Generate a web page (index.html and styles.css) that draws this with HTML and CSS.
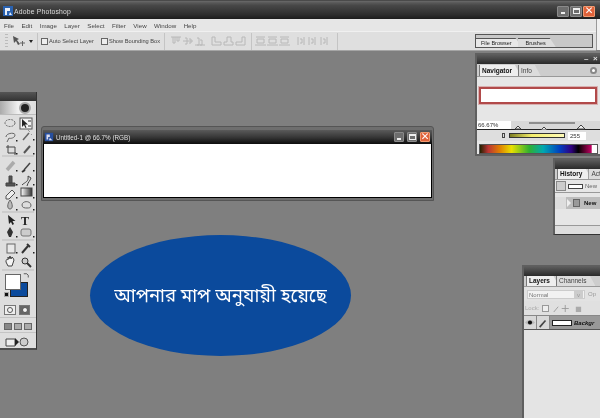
FILE: index.html
```html
<!DOCTYPE html>
<html lang="bn">
<head>
<meta charset="utf-8">
<title>Adobe Photoshop</title>
<link rel="stylesheet" href="styles.css">
</head>
<body>
<div class="app">
  <header class="titlebar">
    <svg class="ps-icon" viewBox="0 0 12 12"><rect x="1" y="1" width="10" height="10" fill="#2a62b0"/><path d="M3 3h5v3H5v4H3zM8 7l2 3H7z" fill="#e8eef8"/></svg>
    <span class="title-text">Adobe Photoshop</span>
    <div class="winbtns">
      <span class="wb"><i class="min"></i></span><span class="wb"><i class="max"></i></span><span class="wb close">✕</span>
    </div>
  </header>
  <nav class="menubar">
    <span>File</span><span>Edit</span><span>Image</span><span>Layer</span><span>Select</span><span>Filter</span><span>View</span><span>Window</span><span>Help</span>
  </nav>
  <div class="options">
    <div class="grip"></div>
    <svg class="move" viewBox="0 0 24 12"><path d="M1 1l6 3-2 1 3 4-2 1-2-4-2 2z" fill="#555"/><path d="M8 8h5M10.500 6v5" stroke="#666"/><path d="M17 5h4l-2 3z" fill="#222"/></svg>
    <div class="sep first"></div>
    <label class="chk"><i></i>Auto Select Layer</label>
    <label class="chk"><i></i>Show Bounding Box</label>
    <div class="sep s1"></div>
    <svg class="aligns a1" viewBox="0 0 75 10"><g fill="none" stroke="#b8b8b8"><path d="M0 1h10M2 1v6h2V1M6 1v4h2V1M12 5h10M14 2h2v6h-2M18 3h2v4h-2M24 9h10M26 2h2v7h-2M29 4h2v5h-2"/><path d="M41 1v8h9V6h-6V1zM53 9h9V6h-2V1h-4v5h-3zM65 9h9V1h-3v5h-6z"/></g></svg>
    <div class="sep s2"></div>
    <svg class="aligns a2" viewBox="0 0 75 10"><g fill="none" stroke="#b8b8b8"><path d="M1 1h9M2 3h7v4H2zM0 9h11M13 1h9M14 3h7v4h-7zM12 9h11M25 1h9M26 3h7v4h-7zM24 9h11"/><path d="M43 1v8M45 3h2v4h-2M49 1v8M54 1v8M56 3h2v4h-2M60 1v8M66 1v8M68 3h2v4h-2M72 1v8"/></g></svg>
    <div class="sep s3"></div>
    <div class="well">
      <div class="well-tab">File Browser</div>
      <div class="well-tab second">Brushes</div>
    </div>
  </div>
  <div class="app-edge"></div>

  <section class="ps-win doc">
    <div class="doc-title">
      <svg class="doc-icon" viewBox="0 0 12 12"><rect x="1" y="1" width="10" height="10" fill="#274f9f"/><path d="M3 3h4v3H5v3H3zM7 7l3 3H6z" fill="#dde"/></svg>
      <span class="doc-text">Untitled-1 @ 66.7% (RGB)</span>
      <div class="winbtns small">
        <span class="wb"><i class="min"></i></span><span class="wb"><i class="max"></i></span><span class="wb close">✕</span>
      </div>
    </div>
    <div class="doc-canvas"></div>
  </section>

  <div class="bubble">আপনার মাপ অনুযায়ী হয়েছে</div>

  <aside class="toolbox">
    <div class="pal-bar"></div>
    <div class="tool-head"><span class="eye-ball"></span></div>
    <div class="tools">
      <svg viewBox="0 0 36 156" class="tool-svg">
        <defs><linearGradient id="g"><stop offset="0" stop-color="#fff"/><stop offset="1" stop-color="#333"/></linearGradient></defs>
        <path d="M2 41h32M2 97h32M2 125h32M2 155h32" stroke="#bbb"/>
        <rect x="20" y="3" width="12" height="11" fill="#f2f2f2" stroke="#555"/>
        <path d="M22 4v8l2-2 1.500 3 1-.5-1.500-3h3z" fill="#222"/><path d="M28 6h3M28 11h3" stroke="#333"/>
        <g fill="none" stroke="#666">
          <ellipse cx="10" cy="8" rx="5" ry="3.500" stroke-dasharray="2 1"/>
          <path d="M6 22c0-4 9-5 9-2s-5 4-6 3l-2 4"/>
          <path d="M8 30v8h8M6 32h9v8" stroke="#444"/>
          <path d="M29 18l-6 7" stroke-width="1.500"/><path d="M28 15l2 2M31 19l1 1" stroke="#999"/>
          <path d="M24 38l6-7" stroke-width="2" stroke="#555"/>
          <path d="M7 55l7-8" stroke="#aaa" stroke-width="3.500"/>
          <path d="M24 55l6-7" stroke="#444" stroke-width="1.500"/><path d="M22 57l3-2" stroke="#333" stroke-width="2"/>
          <path d="M6 71h9v-3H6zM9 61h3v7H9z" fill="#555" stroke="#444"/>
          <path d="M22 70c3-3 7-3 6-9l3 2c-1 3-3 4-4 8" stroke="#444"/>
          <path d="M6 81l6-6 3 3-6 6H6z" fill="#eee" stroke="#555"/>
          <rect x="21" y="73" width="11" height="8" fill="url(#g)" stroke="#444"/>
          <path d="M10 85c-3 4-3 9 0 9s3-5 0-9z" fill="#bbb"/>
          <path d="M22 90c0-4 8-5 9 0 0 3-2 3-4 3s-5 0-5-3z" fill="#ddd"/>
        </g>
        <path d="M8 100l1 9 2-2 1.500 3 1.500-1-1.500-3h3z" fill="#222"/>
        <text x="21" y="110" class="t-tool">T</text>
        <path d="M10 112l3 5-2 5h-2l-2-5z" fill="#333"/>
        <rect x="21" y="114" width="10" height="7" rx="2" fill="#ccc" stroke="#777"/>
        <rect x="7" y="129" width="8" height="9" fill="#e8e8e8" stroke="#666"/>
        <path d="M22 138l6-7" stroke="#333" stroke-width="2"/><path d="M27 129l3 3" stroke="#333" stroke-width="2"/>
        <path d="M6 147c0-3 1-3 2-2v-3l1 2 1-3 1 3 1-2 1 1 1 2-2 6H8z" fill="#f4f4f4" stroke="#444"/>
        <circle cx="25" cy="146" r="3" fill="#ccc" stroke="#333"/><path d="M27 148l4 4" stroke="#333" stroke-width="2"/>
        <path d="M16 38h1.500v1.500H16zM33 38h1.500v1.500H33zM33 24h1.500v1.500H33zM16 25h1.500v1.500H16zM16 55h1.500v1.500H16zM33 55h1.500v1.500H33zM16 69h1.500v1.500H16zM33 69h1.500v1.500H33zM16 82h1.500v1.500H16zM33 82h1.500v1.500H33zM16 94h1.500v1.500H16zM33 94h1.500v1.500H33zM33 121h1.500v1.500H33zM16 121h1.500v1.500H16zM16 137h1.500v1.500H16zM33 137h1.500v1.500H33z" fill="#222"/>
      </svg>
    </div>
    <div class="swatches">
      <span class="bg"></span><span class="fg"></span><span class="mini"></span>
      <svg class="swap" viewBox="0 0 8 8"><path d="M1 1h4l2 2v3" fill="none" stroke="#333"/></svg>
    </div>
    <div class="modes">
      <span class="mode on"><i></i></span><span class="mode dark"><i></i></span>
    </div>
    <div class="screens"><span class="on"></span><span></span><span></span></div>
    <div class="jump">
      <svg viewBox="0 0 24 10"><path d="M1 2h9v7H1z" fill="#eee" stroke="#444"/><path d="M10 1l4 4-4 4z" fill="#222"/><circle cx="19" cy="5" r="4" fill="#ccc" stroke="#555"/></svg>
    </div>
  </aside>

  <section class="panel nav">
    <div class="pal-bar"><span class="pal-btns"><b>–</b><b>×</b></span></div>
    <div class="tabs">
      <span class="tab active">Navigator</span><span class="tab">Info</span><span class="tab-arrow"></span>
    </div>
    <div class="nav-view"><div class="nav-preview"></div></div>
    <div class="nav-zoom">
      <span class="zoom-val">66.67%</span>
      <svg class="zoom-track" viewBox="0 0 80 9"><path d="M16 2h46" stroke="#444"/><path d="M28 9l3-3 3 3zM2 8l3-3 3 3zM64 8l4-4 4 4z" fill="#eee" stroke="#444"/></svg>
    </div>
    <div class="color-row">
      <span class="c-mark"></span><span class="c-bar"></span><span class="c-val">255</span>
    </div>
    <div class="spectrum"></div>
  </section>

  <section class="panel hist">
    <div class="pal-bar"></div>
    <div class="tabs">
      <span class="tab active">History</span><span class="tab">Act</span>
    </div>
    <div class="hist-src"><span class="h-icon"></span><span class="h-thumb"></span><span class="h-label">New</span></div>
    <div class="hist-row"><span class="h-box"></span><span class="h-flag"></span><span class="h-doc"></span><b>New</b></div>
    <div class="hist-fill"></div>
    <div class="hist-foot"></div>
  </section>

  <section class="panel layers">
    <div class="pal-bar"></div>
    <div class="tabs">
      <span class="tab active">Layers</span><span class="tab">Channels</span>
    </div>
    <div class="l-blend"><span class="l-select">Normal<i>v</i></span><span class="l-op">Op</span></div>
    <div class="l-lock">Lock: <i></i><svg viewBox="0 0 34 10"><path d="M2 9l5-6M15 1v8M11 5h8" stroke="#999" fill="none"/><rect x="27" y="3" width="6" height="6" fill="#aaa"/></svg></div>
    <div class="l-row">
      <span class="l-eye"><svg viewBox="0 0 12 8"><path d="M0 4c3-4 9-4 12 0-3 4-9 4-12 0z" fill="#bbb"/><circle cx="6" cy="4" r="2.500" fill="#111"/></svg></span>
      <span class="l-brush"><svg viewBox="0 0 12 12"><path d="M2 11l7-8" stroke="#444" stroke-width="2"/></svg></span>
      <span class="l-thumb"></span>
      <em>Backgr</em>
    </div>
    <div class="l-empty"></div>
  </section>
</div>
</body>
</html>
```

FILE: styles.css
```css
* { box-sizing: border-box; }
html, body { margin: 0; padding: 0; }
body { width: 600px; height: 418px; overflow: hidden; background: #7f7f7f; font-family: "Liberation Sans", Arial, sans-serif; }

.app { position: relative; width: 600px; height: 418px; overflow: hidden; background: #7f7f7f; filter: blur(0.35px); }

.titlebar { display: flex; align-items: center; height: 19px; padding: 2px 5px 0 2px; background: linear-gradient(#6a6a6a 0, #585858 10%, #474747 25%, #2e2e2e 75%, #1c1c1c 100%); border-top: 1px solid #4a4a4a; }
.ps-icon { width: 12px; height: 12px; margin-right: 0; }
.title-text { font-size: 6.800px; letter-spacing: 0.200px; color: #dcdcdc; }
.winbtns { display: flex; gap: 1px; margin-left: auto; }
.wb { display: flex; align-items: center; justify-content: center; width: 12px; height: 11px; background: #6d6d6d; border: 1px solid #8a8a8a; border-radius: 1px; position: relative; }
.wb .min { width: 4px; height: 2px; background: #eee; margin-top: 4px; }
.wb .max { width: 7px; height: 6px; border: 1px solid #eee; border-top-width: 2px; }
.wb.close { background: #e0623a; border-color: #f09a70; color: #fff; font-size: 8px; font-weight: 700; line-height: 1; }

.menubar { display: flex; height: 12px; margin-right: 4px; padding-left: 4px; gap: 7.500px; align-items: center; background: #e6e6e6; font-size: 6.200px; color: #444; }

.options { display: flex; align-items: center; height: 20px; margin-right: 4px; padding-left: 5px; background: #dfdfdf; border-top: 1px solid #f0f0f0; border-bottom: 1px solid #a5a5a5; font-size: 5.700px; color: #444; }
.grip { width: 3px; height: 14px; background: repeating-linear-gradient(#bbb 0 1px, transparent 1px 3px); margin-right: 4px; }
.move { width: 24px; height: 12px; margin-right: 1px; }
.sep { flex: none; width: 1px; height: 17px; background: #c4c4c4; }
.sep.first { margin-right: 3px; }
.chk { display: flex; align-items: center; gap: 1px; margin-right: 7px; }
.chk i { width: 7px; height: 7px; background: #eee; border: 1px solid #666; }
.chk + .chk { margin-right: 4px; }
.s1 { margin-right: 6px; }
.aligns { flex: none; width: 75px; height: 10px; }
.a1 { margin-right: 5px; }
.s2 { margin-right: 3px; }
.a2 { margin-right: 7px; }
.well { display: flex; align-items: flex-end; width: 118px; height: 14px; margin-left: auto; margin-right: 3px; background: #c8c8c8; border: 1px solid #555; border-top: 1px solid #555; }
.well-tab { height: 9px; padding: 0 10px 0 5px; background: #e8e8e8; border-top: 1px solid #555; font-size: 5.500px; line-height: 8px; color: #222; white-space: nowrap; clip-path: polygon(0 0, calc(100% - 6px) 0, 100% 100%, 0 100%); }
.well-tab.second { margin-left: -4px; padding-left: 8px; background: #ddd; }
.app-edge { position: absolute; top: 19px; right: 0; width: 4px; height: 31px; background: #f0f0f0; border-left: 1px solid #999; }

.ps-win { position: absolute; }
.doc { left: 41px; top: 126px; width: 393px; height: 75px; padding: 3px 1px 2px; background: #6e6e6e; border: 1px solid #555; border-radius: 3px 3px 0 0; display: flex; flex-direction: column; }
.doc-title { display: flex; align-items: center; flex: none; height: 14px; padding: 0 2px 0 1px; background: linear-gradient(#5a5a5a, #383838 50%, #0d0d0d); }
.doc-icon { width: 10px; height: 10px; margin-right: 2px; }
.doc-text { font-size: 6.300px; color: #e0e0e0; }
.small .wb { width: 10px; height: 10px; }
.small { gap: 3px; }
.doc-canvas { flex: 1; background: #fff; border: 1px solid #000; border-top: 0; }

.bubble { position: absolute; left: 90px; top: 235px; width: 261px; height: 121px; display: flex; align-items: center; justify-content: center; border-radius: 50%; background: #0b4a9c; color: #fff; font-family: "Noto Sans", "Noto Sans Bengali", "Lohit Bengali", "FreeSerif", sans-serif; font-size: 18.500px; white-space: nowrap; }

.pal-bar { height: 10px; background: linear-gradient(#555, #2d2d2d); }
.toolbox { position: absolute; left: 0; top: 92px; width: 37px; height: 258px; background: #dedede; border-right: 1px solid #333; border-bottom: 2px solid #4d4d4d; display: flex; flex-direction: column; }
.toolbox .pal-bar { flex: none; height: 9px; background: linear-gradient(#555, #333); }
.tool-head { flex: none; position: relative; height: 14px; background: linear-gradient(90deg, #aaa, #f0f0f0 50%, #ddd); border-bottom: 1px solid #bbb; }
.eye-ball { position: absolute; left: 19px; top: 1px; width: 12px; height: 12px; border-radius: 50%; background: #222; border: 2px solid #aaa; }
.tools { flex: none; height: 156px; }
.tool-svg { display: block; width: 36px; height: 156px; }
.t-tool { font-family: "Liberation Serif", serif; font-size: 12px; font-weight: 700; fill: #222; }
.swatches { flex: none; position: relative; height: 32px; }
.swatches .bg { position: absolute; left: 10px; top: 11px; width: 18px; height: 15px; background: #0b4a9c; border: 1px solid #222; }
.swatches .fg { position: absolute; left: 5px; top: 3px; width: 16px; height: 16px; background: #fff; border: 1px solid #666; }
.swatches .mini { position: absolute; left: 4px; top: 21px; width: 5px; height: 5px; background: #111; border: 1px solid #aaa; }
.swap { position: absolute; left: 23px; top: 2px; width: 6px; height: 6px; }
.modes { flex: none; display: flex; gap: 3px; height: 15px; padding: 2px 4px 0; border-bottom: 1px solid #c4c4c4; }
.mode { display: flex; align-items: center; justify-content: center; width: 12px; height: 10px; background: #ccc; border: 1px solid #777; }
.mode.on { background: #eee; }
.mode.dark { width: 11px; background: #666; }
.mode i { width: 6px; height: 6px; border-radius: 50%; background: #f4f4f4; border: 1px solid #555; }
.screens { flex: none; display: flex; gap: 2px; height: 15px; padding: 5px 4px 0; border-bottom: 1px solid #c4c4c4; }
.screens span { width: 8px; height: 7px; background: #aaa; border: 1px solid #666; }
.screens span.on { background: #888; }
.jump { flex: none; padding: 4px 5px; }
.jump svg { display: block; width: 24px; height: 10px; }

.panel { position: absolute; background: #e6e6e6; border: 2px solid #5f5f5f; border-right: 0; display: flex; flex-direction: column; }
.panel .pal-bar { flex: none; margin: -1px 0 0; height: 10px; background: linear-gradient(#606060, #2a2a2a); }
.pal-btns { display: flex; justify-content: flex-end; gap: 3px; padding-right: 1px; }
.pal-btns b { width: 6px; height: 8px; margin-top: 1px; color: #ddd; font-size: 8px; line-height: 8px; }
.tabs { flex: none; display: flex; align-items: flex-end; height: 13px; padding-left: 2px; background: #cdcdcd; border-bottom: 1px solid #999; font-size: 6.500px; color: #444; white-space: nowrap; overflow: hidden; }
.tab { height: 11px; margin-right: -3px; padding: 0 9px 0 2px; line-height: 11px; border-left: 1px solid #777; clip-path: polygon(0 0, calc(100% - 6px) 0, 100% 100%, 0 100%); background: #dcdcdc; }
.tab.active { font-weight: 700; color: #111; background: #eee; }
.tab-arrow { margin-left: auto; margin-right: 3px; align-self: center; width: 7px; height: 7px; border-radius: 50%; background: #fff; border: 2px solid #888; }

.nav { left: 475px; top: 53px; width: 125px; height: 103px; }
.nav-view { flex: none; height: 44px; padding: 10px 3px 0 2px; background: #e6e6e6; }
.nav-preview { height: 17px; background: #fff; border: 2px solid #b14a4a; outline: 1px solid #d8b0b0; }
.nav-zoom { flex: none; display: flex; align-items: center; height: 9px; background: #d8d8d8; border-bottom: 1px solid #222; }
.zoom-val { flex: none; width: 34px; height: 8px; padding-left: 1px; background: #fff; font-size: 6px; line-height: 8px; color: #333; }
.zoom-track { width: 80px; height: 9px; margin-left: 2px; overflow: visible; }
.color-row { flex: none; display: flex; align-items: center; height: 11px; padding-left: 25px; background: #dedede; }
.c-mark { width: 3px; height: 5px; border: 1px solid #444; margin-right: 4px; }
.c-bar { width: 56px; height: 5px; background: linear-gradient(90deg, #7c7c20, #f5ee6b 40%, #fffbb8); border: 1px solid #333; }
.c-val { width: 18px; margin-left: 3px; background: #fff; font-size: 6px; line-height: 8px; color: #333; padding-left: 2px; }
.spectrum { flex: none; height: 10px; margin: 3px 2px 0 2px; border: 1px solid #555; background: linear-gradient(90deg, #220, #b33 7%, #e08000 17%, #e8e000 27%, #30b030 42%, #00a8b0 54%, #0040c0 68%, #300080 78%, #000 84%, #c00060 95%, #fff 96%); }

.hist { left: 553px; top: 158px; width: 47px; height: 77px; border-bottom: 1px solid #333; }
.hist .tabs { height: 11px; }
.hist-src { flex: none; display: flex; align-items: center; height: 13px; gap: 2px; padding-left: 1px; border-bottom: 1px solid #999; font-size: 6px; color: #666; white-space: nowrap; }
.h-icon { flex: none; width: 10px; height: 10px; background: #ccc; border: 1px solid #888; }
.h-thumb { flex: none; width: 15px; height: 5px; background: #fff; border: 1px solid #444; }
.hist-row { flex: none; display: flex; align-items: center; height: 12px; margin-top: 4px; background: #bdbdbd; font-size: 6px; white-space: nowrap; }
.hist-row b { color: #111; margin-left: 4px; }
.h-box { flex: none; width: 11px; height: 12px; background: #ddd; }
.h-flag { flex: none; width: 0; height: 0; margin-left: 1px; border-left: 4px solid #eee; border-top: 4px solid transparent; border-bottom: 4px solid transparent; }
.h-doc { flex: none; width: 7px; height: 8px; margin-left: 2px; background: #999; border: 1px solid #666; }
.hist-fill { flex: 1; background: #e6e6e6; border-bottom: 1px solid #999; }
.hist-foot { flex: none; height: 8px; background: #dedede; }

.layers { left: 522px; top: 265px; width: 78px; height: 153px; border-bottom: 0; }
.layers .tabs { height: 11px; }
.l-blend { flex: none; display: flex; align-items: center; height: 14px; padding-left: 3px; font-size: 6px; color: #999; background: #e2e2e2; }
.l-select { display: flex; justify-content: space-between; width: 58px; height: 9px; padding: 0 1px; line-height: 8px; background: #f2f2f2; border: 1px solid #ccc; color: #777; }
.l-select i { font-style: normal; width: 9px; text-align: center; background: #ccc; color: #999; }
.l-op { margin-left: 3px; }
.l-lock { flex: none; display: flex; align-items: center; height: 15px; padding-left: 1px; gap: 3px; font-size: 6px; color: #aaa; background: #e0e0e0; border-bottom: 1px solid #888; }
.l-lock i { width: 7px; height: 7px; background: #eee; border: 1px solid #999; }
.l-lock svg { width: 30px; height: 9px; }
.l-row { flex: none; display: flex; align-items: center; height: 14px; background: #999; border-bottom: 1px solid #555; font-size: 6px; white-space: nowrap; }
.l-eye, .l-brush { flex: none; display: flex; align-items: center; justify-content: center; width: 13px; height: 13px; background: #d8d8d8; border-right: 1px solid #888; }
.l-eye svg { width: 10px; height: 7px; }
.l-brush svg { width: 10px; height: 10px; }
.l-thumb { flex: none; width: 20px; height: 6px; margin: 0 2px; background: #fff; border: 1px solid #222; }
.l-row em { color: #111; font-weight: 700; }
.l-empty { flex: 1; background: #e4e4e4; }
```
